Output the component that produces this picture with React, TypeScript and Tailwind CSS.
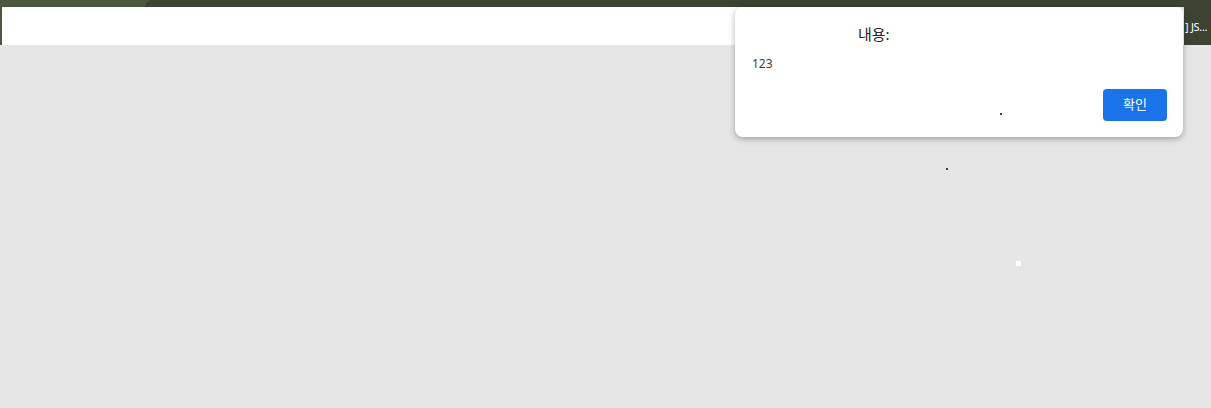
import { useState } from "react";

export default function App() {
  const [open, setOpen] = useState(true);

  return (
    <div className="relative h-[408px] w-full overflow-hidden bg-[#e6e6e6] font-['Noto_Sans','Noto_Sans_CJK_KR',sans-serif]">
      {/* browser chrome strip */}
      <div className="flex h-[7px] bg-[#4b573f]">
        <div className="w-[145px]" />
        <div className="flex-1 rounded-tl-[10px] bg-[#3c4333]" />
      </div>
      <div className="flex h-[38px]">
        <div className="w-[2px] bg-[#4b573f]" />
        <div className="flex-1 rounded-tr-[6px] bg-white" />
        <div className="flex w-[27px] items-center overflow-hidden bg-[#3c4333] text-[11px] leading-none tracking-[-0.3px] text-white">
          <span className="whitespace-nowrap pl-[1px]">] JS...</span>
        </div>
      </div>

      {/* alert dialog */}
      {open ? (
        <div className="absolute left-[735px] top-[7px] flex h-[130px] w-[448px] flex-col rounded-[8px] bg-white shadow-[0_2px_6px_rgba(0,0,0,0.3)]">
          <p className="ml-[123px] mt-[16px] text-[15px] leading-[22px] text-[#202124]">
            내용:
          </p>
          <p className="ml-[17px] mt-[11px] text-[12px] leading-[16px] text-[#3c4043]">
            123
          </p>
          <div className="mt-auto flex justify-end pb-[16px] pr-[16px]">
            <button
              className="h-[32px] w-[64px] rounded-[4px] bg-[#1a73e8] text-[13px] text-white"
              onClick={() => setOpen(false)}
              type="button"
            >
              확인
            </button>
          </div>
          <span className="absolute left-[265px] top-[106px] h-[2px] w-[2px] rounded-full bg-black" />
        </div>
      ) : null}

      {/* stray pixels */}
      <span className="absolute left-[946px] top-[168px] h-[2px] w-[2px] rounded-full bg-black" />
      <span className="absolute left-[1016px] top-[261px] h-[5px] w-[5px] bg-white" />
    </div>
  );
}
